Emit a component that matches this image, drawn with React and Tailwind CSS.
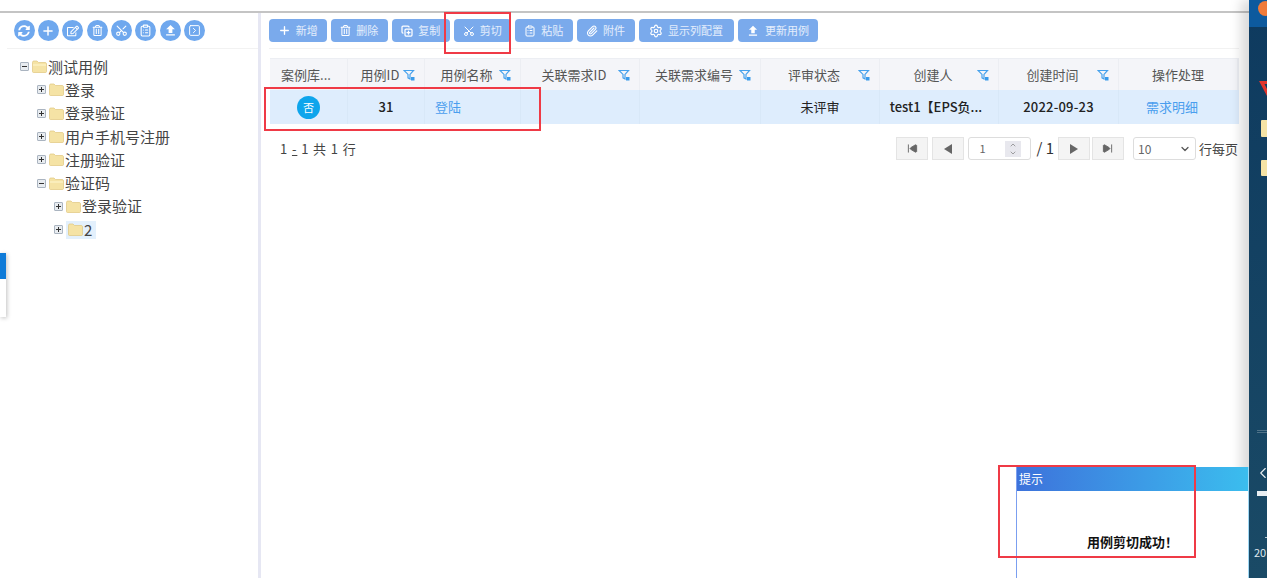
import React from "react";
import {
  Plus,
  Scissors,
  ClipboardList,
  SquareChevronRight,
  CopyPlus,
  Paperclip,
  Settings,
  SkipBack,
  SkipForward,
  ChevronUp,
  ChevronDown,
  ChevronLeft,
} from "lucide-react";
import { FaSyncAlt, FaRegEdit, FaRegTrashAlt } from "react-icons/fa";
import { MdFileUpload } from "react-icons/md";

const FONT = "font-['Noto_Sans_CJK_SC','Noto_Sans',sans-serif]";
const COLS = "grid-cols-[78px_77px_96px_119px_121px_119px_119px_120px_120px]";

function FilterIcon() {
  return (
    <svg width="12" height="12" viewBox="0 0 12 12" className="absolute right-[9px] top-[10px]">
      <path d="M1 1.500h9.500L7 5.400V10L5 8.800V5.400z" fill="none" stroke="#45a1ec" strokeWidth="1.200" />
      <rect x="8" y="8" width="3.500" height="3.500" fill="#3a9bea" />
    </svg>
  );
}

function Folder({ open }) {
  return (
    <svg width="15" height="13" viewBox="0 0 15 13" className="shrink-0">
      <path d="M.5 2.500C.5 1.500 1 1 2 1h3l1.500 1.500H13c1 0 1.500.5 1.500 1.500v7.500c0 .6-.5 1-1 1h-12c-.6 0-1-.4-1-1z" fill="#f5e3a5" stroke="#dfc67e" strokeWidth="0.700" />
      {open && <path d="M1 5h13" stroke="#fdf3c8" strokeWidth="1.200" />}
    </svg>
  );
}

function Toggle({ open }) {
  return (
    <span className="flex h-[9px] w-[9px] shrink-0 items-center justify-center rounded-[1px] border border-[#aab4c0] bg-[#e8ecf0]">
      <svg width="7" height="7" viewBox="0 0 7 7">
        <path d={open ? "M1 3.500h5" : "M1 3.500h5M3.500 1v5"} stroke="#333" strokeWidth="1" />
      </svg>
    </span>
  );
}

function TreeNode({ label, depth = 0, open, active }) {
  const pad = depth === 0 ? "pl-[20px]" : depth === 1 ? "pl-[37px]" : "pl-[54px]";
  return (
    <div className={`flex h-[23.300px] items-center ${pad}`}>
      <Toggle open={open} />
      <span className={`ml-[3px] flex h-[18px] items-center ${active ? "bg-[#e3f0fc] pl-[2px] pr-[4px]" : ""}`}>
        <Folder open={open} />
        <span className="ml-[1px] text-[15px] leading-[18px] text-[#444]">{label}</span>
      </span>
    </div>
  );
}

function RoundBtn({ children }) {
  return <span className="flex h-[21px] w-[21px] items-center justify-center rounded-full bg-[#6fa8ee] text-white">{children}</span>;
}

function ToolBtn({ icon, label, width }) {
  return (
    <button className={`flex h-[23px] items-center justify-center gap-[5px] rounded-[4px] bg-[#7aaaec] text-[11px] text-white/80 ${width}`}>
      {icon}
      {label}
    </button>
  );
}

function Th({ label, filter, className = "" }) {
  return (
    <div className={`relative flex items-center justify-center border-r border-[#eceef3] text-[13px] text-[#555] ${filter ? "pr-[12px]" : ""} ${className}`}>
      <span>{label}</span>
      {filter && <FilterIcon />}
    </div>
  );
}

function Td({ children, className = "" }) {
  return <div className={`flex items-center justify-center border-r border-[#d8e8f8] text-[13px] ${className}`}>{children}</div>;
}

function PageBtn({ children, className = "" }) {
  return <span className={`flex h-[23px] w-[32px] items-center justify-center border border-[#e4e4e4] bg-[#f4f4f4] ${className}`}>{children}</span>;
}

const Annotation = ({ className }) => <div className={`absolute border-2 border-[#ef3a46] ${className}`} />;

export default function App() {
  return (
    <div className={`relative flex h-[578px] w-[1267px] overflow-hidden bg-white ${FONT}`}>
      <div className="flex min-w-0 flex-1 flex-col">
        <div className="h-[13px] shrink-0 border-b-2 border-[#c4c4c4] bg-white" />
        <div className="flex flex-1">
          {/* left tree */}
          <div className="w-[258px] shrink-0">
            <div className="ml-[7px] flex h-[36px] items-center gap-[3.400px] border-b border-[#f2f2f2] pl-[6.500px]">
              <RoundBtn><FaSyncAlt size={12} /></RoundBtn>
              <RoundBtn><Plus size={14} strokeWidth={2.500} /></RoundBtn>
              <RoundBtn><FaRegEdit size={12} /></RoundBtn>
              <RoundBtn><FaRegTrashAlt size={11} /></RoundBtn>
              <RoundBtn><Scissors size={13} strokeWidth={2} className="-rotate-90" /></RoundBtn>
              <RoundBtn><ClipboardList size={13} strokeWidth={2} /></RoundBtn>
              <RoundBtn><MdFileUpload size={15} /></RoundBtn>
              <RoundBtn><SquareChevronRight size={13} strokeWidth={1.800} /></RoundBtn>
            </div>
            <div className="pt-[6px]">
              <TreeNode label="测试用例" open />
              <TreeNode label="登录" depth={1} />
              <TreeNode label="登录验证" depth={1} />
              <TreeNode label="用户手机号注册" depth={1} />
              <TreeNode label="注册验证" depth={1} />
              <TreeNode label="验证码" depth={1} open />
              <TreeNode label="登录验证" depth={2} />
              <TreeNode label="2" depth={2} active />
            </div>
          </div>
          <div className="w-[3px] shrink-0 bg-[#e6e7f3]" />
          {/* table side */}
          <div className="min-w-0 flex-1 pl-[8px] pr-[10px]">
            <div className="flex h-[36px] gap-[4px] border-b border-[#f2f2f2] pt-[6px]">
              <ToolBtn icon={<Plus size={13} color="#fff" strokeWidth={2.500} />} label="新增" width="w-[57.500px]" />
              <ToolBtn icon={<FaRegTrashAlt size={11} color="#fff" />} label="删除" width="w-[57.500px]" />
              <ToolBtn icon={<CopyPlus size={12} color="#fff" strokeWidth={2.500} />} label="复制" width="w-[57.500px]" />
              <ToolBtn icon={<Scissors size={12} color="#fff" strokeWidth={2} className="-rotate-90" />} label="剪切" width="w-[57.500px]" />
              <ToolBtn icon={<ClipboardList size={12} color="#fff" strokeWidth={2} />} label="粘贴" width="w-[57.500px]" />
              <ToolBtn icon={<Paperclip size={12} color="#fff" strokeWidth={2.200} />} label="附件" width="w-[58px]" />
              <ToolBtn icon={<Settings size={14} color="#fff" strokeWidth={2} />} label="显示列配置" width="w-[95px]" />
              <ToolBtn icon={<MdFileUpload size={14} color="#fff" />} label="更新用例" width="w-[80px]" />
            </div>
            <div className="ml-[1px] mt-[9px] w-[969px]">
              <div className={`grid h-[32px] ${COLS} border-t border-[#eceef3] bg-[#f4f5f9]`}>
                <Th label="案例库..." className="pr-[5px]" />
                <Th label="用例ID" filter />
                <Th label="用例名称" filter />
                <Th label="关联需求ID" filter />
                <Th label="关联需求编号" filter />
                <Th label="评审状态" filter />
                <Th label="创建人" filter />
                <Th label="创建时间" filter />
                <Th label="操作处理" className="border-r-2 border-[#dfe1e8]" />
              </div>
              <div className={`grid h-[34px] ${COLS} bg-[#deedfd] text-[#222]`}>
                <Td>
                  <span className="flex h-[23px] w-[23px] items-center justify-center rounded-full bg-[#0ea5ec] text-[11px] text-white">否</span>
                </Td>
                <Td className="font-medium">31</Td>
                <Td className="justify-start pl-[10px] text-[#4a9eee]">登陆</Td>
                <Td />
                <Td />
                <Td>未评审</Td>
                <Td className="pr-[6px] font-medium">test1【EPS负...</Td>
                <Td className="font-medium tracking-[0.2px]">2022-09-23</Td>
                <Td className="border-r-0 pr-[14px] text-[#4a9eee]">需求明细</Td>
              </div>
              <div className="flex h-[49px] items-center justify-between pr-[1px] text-[13px] text-[#444]">
                <span className="pl-[10px] tracking-[0.9px]">1 <span className="underline">-</span> 1 共 1 行</span>
                <div className="flex items-center gap-[4px]">
                  <PageBtn><SkipBack size={11} fill="#666" color="#666" /></PageBtn>
                  <PageBtn><span className="h-0 w-0 border-y-[5px] border-r-[8px] border-y-transparent border-r-[#666]" /></PageBtn>
                  <span className="flex h-[23px] w-[63px] items-center justify-between rounded-[3px] border border-[#ddd] pl-[10px] pr-[9px] text-[11px] text-[#666]">
                    1
                    <span className="flex h-[16px] w-[16px] flex-col items-center justify-center bg-[#e8e8ee]">
                      <ChevronUp size={8} color="#777" />
                      <ChevronDown size={8} color="#777" />
                    </span>
                  </span>
                  <span className="ml-[1px] text-[15px] text-[#333]">/ 1</span>
                  <PageBtn><span className="h-0 w-0 border-y-[5px] border-l-[8px] border-y-transparent border-l-[#666]" /></PageBtn>
                  <PageBtn className="-ml-[2px]"><SkipForward size={11} fill="#666" color="#666" /></PageBtn>
                  <span className="ml-[5px] flex h-[23px] w-[63px] items-center justify-between rounded-[3px] border border-[#ddd] pl-[4px] pr-[4px] text-[12px] text-[#666]">
                    10
                    <ChevronDown size={12} color="#555" strokeWidth={2.500} />
                  </span>
                  <span className="-ml-[1px] text-[13px] text-[#444]">行每页</span>
                </div>
              </div>
            </div>
          </div>
        </div>
      </div>

      {/* desktop strip on the right */}
      <div className="relative w-[18px] shrink-0 bg-gradient-to-b from-[#0e3a5f] to-[#1a4a66] shadow-[-8px_0_12px_rgba(0,0,0,0.15)]">
        <div className="h-[27px] bg-[#0d5a9e]" />
        <span className="absolute left-[9px] top-[1px] h-[15px] w-[15px] rounded-full bg-[#ef7b3a]" />
        <svg width="18" height="17" viewBox="0 0 18 17" className="absolute left-[9px] top-[80px]">
          <path d="M1 1h16L9 16z M6.500 4l2.500 5 2.500-5z" fill="#e3342c" fillRule="evenodd" />
        </svg>
        <span className="absolute left-[12px] top-[120px] h-[17px] w-[8px] rounded-[1px] bg-[#f5e3a5]" />
        <span className="absolute left-[12px] top-[160px] h-[16px] w-[8px] rounded-[1px] bg-[#f5e3a5]" />
        <span className="absolute left-[8px] top-[430px] h-[3px] w-[10px] border-y border-[#4f7288]" />
        <ChevronLeft size={18} color="#e8eef2" strokeWidth={1.500} className="absolute left-[5px] top-[464px]" />
        <span className="absolute left-[8px] top-[491px] h-[5px] w-[10px] bg-[#e8eef2]" />
        <span className="absolute left-[16px] top-[537px] h-[1px] w-[2px] bg-[#b8c8d2]" />
        <span className="absolute left-[5px] top-[545px] text-[11px] leading-[14px] text-[#dfe8ee]">20</span>
      </div>

      {/* small cut-off popup at the left edge */}
      <div className="absolute left-0 top-[253px] h-[64px] w-[6px] bg-white shadow-[1px_1px_4px_rgba(0,0,0,0.25)]">
        <div className="h-[26px] bg-[#0f7bd8]" />
      </div>

      {/* toast */}
      <div className="absolute left-[1016px] top-[467px] h-[111px] w-[233px] border-x border-l-[#7b9ff0] border-r-[#9fd8f5] bg-white">
        <div className="flex h-[24px] items-center bg-gradient-to-r from-[#3d72db] to-[#3bbdee] pl-[2px] text-[12px] text-white">提示</div>
        <div className="absolute left-[70px] top-[65px] text-[13px] font-bold leading-[20px] text-[#111]">用例剪切成功！</div>
      </div>

      {/* red annotation boxes */}
      <Annotation className="left-[444px] top-[12px] h-[42px] w-[67px]" />
      <Annotation className="left-[264px] top-[87px] h-[44px] w-[277px]" />
      <Annotation className="left-[998px] top-[465px] h-[93px] w-[198px]" />
    </div>
  );
}
